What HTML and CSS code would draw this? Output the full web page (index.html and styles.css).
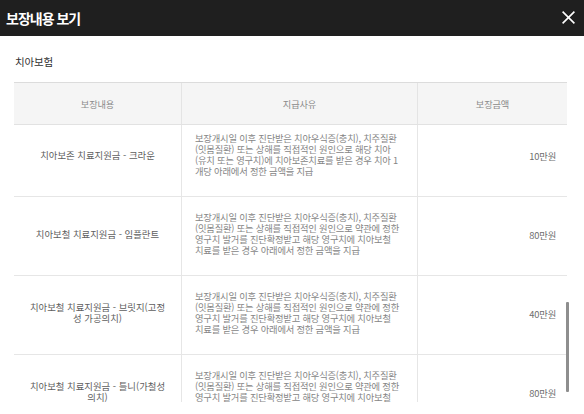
FILE: index.html
```html
<!DOCTYPE html>
<html lang="ko">
<head>
<meta charset="utf-8">
<title>보장내용 보기</title>
<link rel="stylesheet" href="styles.css">
</head>
<body>
<div class="modal">
  <header class="head">
    <h1 class="head-title">보장내용 보기</h1>
    <button class="close" aria-label="닫기">
      <svg width="13" height="13" viewBox="0 0 13 13"><path d="M0.6 0.6L12.4 12.4M12.4 0.6L0.6 12.4" stroke="#fff" stroke-width="1.6" fill="none"/></svg>
    </button>
  </header>
  <div class="body">
    <h2 class="sec-title">치아보험</h2>
    <div class="table">
      <div class="thead">
        <div class="th">보장내용</div>
        <div class="th">지급사유</div>
        <div class="th">보장금액</div>
      </div>
      <div class="tbody-clip">
        <div class="tbody">
          <div class="tr">
            <div class="td name">치아보존 치료지원금 - 크라운</div>
            <div class="td desc">보장개시일 이후 진단받은 치아우식증(충치), 치주질환<br>(잇몸질환) 또는 상해를 직접적인 원인으로 해당 치아<br>(유치 또는 영구치)에 치아보존치료를 받은 경우 치아 1<br>개당 아래에서 정한 금액을 지급</div>
            <div class="td amt">10만원</div>
          </div>
          <div class="tr">
            <div class="td name">치아보철 치료지원금 - 임플란트</div>
            <div class="td desc">보장개시일 이후 진단받은 치아우식증(충치), 치주질환<br>(잇몸질환) 또는 상해를 직접적인 원인으로 약관에 정한<br>영구치 발거를 진단확정받고 해당 영구치에 치아보철<br>치료를 받은 경우 아래에서 정한 금액을 지급</div>
            <div class="td amt">80만원</div>
          </div>
          <div class="tr">
            <div class="td name">치아보철 치료지원금 - 브릿지(고정<br>성 가공의치)</div>
            <div class="td desc">보장개시일 이후 진단받은 치아우식증(충치), 치주질환<br>(잇몸질환) 또는 상해를 직접적인 원인으로 약관에 정한<br>영구치 발거를 진단확정받고 해당 영구치에 치아보철<br>치료를 받은 경우 아래에서 정한 금액을 지급</div>
            <div class="td amt">40만원</div>
          </div>
          <div class="tr">
            <div class="td name">치아보철 치료지원금 - 틀니(가철성<br>의치)</div>
            <div class="td desc">보장개시일 이후 진단받은 치아우식증(충치), 치주질환<br>(잇몸질환) 또는 상해를 직접적인 원인으로 약관에 정한<br>영구치 발거를 진단확정받고 해당 영구치에 치아보철<br>치료를 받은 경우 아래에서 정한 금액을 지급</div>
            <div class="td amt">80만원</div>
          </div>
        </div>
      </div>
    </div>
  </div>
  <div class="scroll-thumb"></div>
</div>
</body>
</html>
```
FILE: styles.css
```css
* { box-sizing: border-box; }
html, body { margin: 0; padding: 0; background: #fff; }
body {
  font-family: "Noto Sans CJK KR", "Noto Sans", sans-serif;
  width: 584px;
  height: 414px;
  overflow: hidden;
}
.modal {
  position: relative;
  width: 584px;
  height: 414px;
  display: flex;
  flex-direction: column;
  background: #fff;
}
.head {
  height: 36px;
  flex: none;
  background: #1f1f1f;
  display: flex;
  align-items: center;
  justify-content: space-between;
  padding: 0 9px 0 6px;
}
.head-title {
  margin: 0;
  color: #fff;
  font-size: 14px;
  font-weight: 700;
  letter-spacing: -1px;
  line-height: 20px;
}
.close {
  border: 0;
  background: none;
  padding: 0;
  width: 13px;
  height: 13px;
  display: flex;
  margin-top: -2px;
}
.body {
  height: 366px;
  overflow: hidden;
  padding: 19px 17px 0 14px;
}
.sec-title {
  margin: 0 0 13px 1px;
  font-size: 10.5px;
  font-weight: 400;
  line-height: 14px;
  color: #333;
  letter-spacing: -0.2px;
}
.table {
  width: 553px;
}
.thead {
  display: grid;
  grid-template-columns: 167px 236px 1fr;
  height: 43px;
  background: #f5f5f5;
  border-top: 1px solid #dcdcdc;
  border-bottom: 1px solid #e2e2e2;
}
.th {
  display: flex;
  align-items: center;
  justify-content: center;
  font-size: 9.2px;
  color: #8a8a8a;
  letter-spacing: -0.1px;
}
.th + .th { border-left: 1px solid #e4e4e4; }
.tbody-clip { overflow: hidden; }
.tbody { margin-top: -7px; }
.tr {
  display: grid;
  grid-template-columns: 167px 236px 1fr;
  border-bottom: 1px solid #e6e6e6;
}
.td {
  font-size: 9.3px;
  line-height: 11px;
  letter-spacing: -0.2px;
  color: #777;
}
.td + .td { border-left: 1px solid #e6e6e6; }
.name {
  display: flex;
  align-items: center;
  justify-content: center;
  text-align: center;
  padding: 15px 6px 19px;
  font-size: 9.4px;
  color: #5e5e5e;
  letter-spacing: 0;
}
.desc {
  padding: 15px 4px 19px 13px;
  color: #858585;
  white-space: nowrap;
}
.amt {
  display: flex;
  align-items: center;
  justify-content: flex-end;
  padding: 15px 11px 17px 10px;
  color: #6e6e6e;
}
.scroll-thumb {
  position: absolute;
  left: 566px;
  top: 302px;
  width: 3px;
  height: 90px;
  background: #8e8e8e;
  border-radius: 1px;
}
```
